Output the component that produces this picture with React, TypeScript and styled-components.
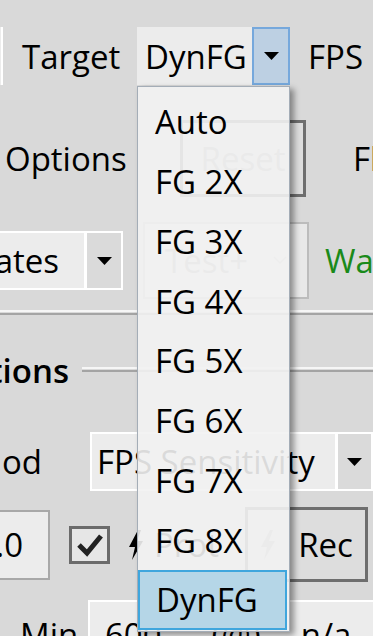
import React from "react";
import styled, { createGlobalStyle } from "styled-components";

const Global = createGlobalStyle`
  html, body { margin: 0; padding: 0; background: #d9d9d9; }
  #root { width: 373px; height: 636px; }
`;

const Page = styled.div`
  position: relative;
  width: 373px;
  height: 636px;
  overflow: hidden;
  background: #d9d9d9;
  font-family: "Open Sans", "Noto Sans", sans-serif;
  font-size: 33px;
  color: #000;
  white-space: nowrap;
`;

const Row = styled.div<{ $top: number; $h: number }>`
  display: flex;
  align-items: center;
  height: ${(p) => p.$h}px;
  margin-top: ${(p) => p.$top}px;
`;

const LeftStub = styled.div`
  align-self: stretch;
  width: 3px;
  box-sizing: border-box;
  background: #ececec;
  border-right: 2px solid #fff;
`;

const Label = styled.div<{ $w?: number; $pl?: number; $pr?: number; $ml?: number; $right?: boolean; $color?: string }>`
  display: flex;
  justify-content: ${(p) => (p.$right ? "flex-end" : "flex-start")};
  flex: none;
  box-sizing: border-box;
  ${(p) => (p.$w ? `width: ${p.$w}px;` : "")}
  padding-left: ${(p) => p.$pl ?? 0}px;
  padding-right: ${(p) => p.$pr ?? 0}px;
  margin-left: ${(p) => p.$ml ?? 0}px;
  color: ${(p) => p.$color ?? "#000"};
`;

const Combo = styled.div<{ $w: number; $h: number; $ml?: number; $border?: string }>`
  display: flex;
  flex: none;
  box-sizing: border-box;
  width: ${(p) => p.$w}px;
  height: ${(p) => p.$h}px;
  margin-left: ${(p) => p.$ml ?? 0}px;
  background: #ececec;
  border: ${(p) => (p.$border ? `2px solid ${p.$border}` : "none")};
`;

const ComboText = styled.div<{ $pl?: number; $pr?: number; $right?: boolean; $disabled?: boolean }>`
  flex: 1;
  display: flex;
  align-items: center;
  justify-content: ${(p) => (p.$right ? "flex-end" : "flex-start")};
  padding-left: ${(p) => p.$pl ?? 0}px;
  padding-right: ${(p) => p.$pr ?? 0}px;
  color: ${(p) => (p.$disabled ? "#a3a3a3" : "#000")};
  min-width: 0;
`;

const DropBtn = styled.div<{ $hot?: boolean; $w: number }>`
  flex: none;
  box-sizing: border-box;
  width: ${(p) => p.$w}px;
  display: flex;
  align-items: center;
  justify-content: center;
  background: ${(p) => (p.$hot ? "#bdd0e3" : "#dadada")};
  border: ${(p) => (p.$hot ? "2px solid #76a8dc" : "none")};
  border-left: ${(p) => (p.$hot ? "2px solid #76a8dc" : "3px solid #fff")};
`;

const Arrow = () => (
  <svg width="15" height="8" viewBox="0 0 15 8">
    <polygon points="0,0 15,0 7.5,8" fill="#000" />
  </svg>
);

const Chevron = () => (
  <svg width="14" height="9" viewBox="0 0 14 9">
    <polyline points="1,1 7,7 13,1" fill="none" stroke="#c4c4c4" strokeWidth="1.5" />
  </svg>
);

const Button = styled.div<{ $w: number; $h: number; $disabled?: boolean; $ml?: number }>`
  flex: none;
  box-sizing: border-box;
  width: ${(p) => p.$w}px;
  height: ${(p) => p.$h}px;
  margin-left: ${(p) => p.$ml ?? 0}px;
  display: flex;
  align-items: center;
  justify-content: center;
  gap: 22px;
  background: #dddddd;
  border: 3px solid #6e6e6e;
  color: ${(p) => (p.$disabled ? "#a0a0a0" : "#000")};
`;

const DisabledCombo = styled.div`
  flex: none;
  box-sizing: border-box;
  width: 166px;
  height: 77px;
  margin-left: 20px;
  display: flex;
  align-items: center;
  justify-content: space-between;
  padding: 0 20px;
  background: #e8e8e8;
  border: 2px solid #bcbcbc;
  color: #a3a3a3;
`;

const Etched = styled.div<{ $top: number; $ml?: number }>`
  flex: 1;
  height: 1px;
  margin-top: ${(p) => p.$top}px;
  margin-left: ${(p) => p.$ml ?? 0}px;
  border-top: 2px solid #f6f6f6;
  border-bottom: 2px solid #a4a4a4;
`;

const GroupTitle = styled.div`
  flex: none;
  width: 69px;
  display: flex;
  justify-content: flex-end;
  font-weight: 600;
`;

const TextBox = styled.div<{ $w: number; $h: number; $ml?: number; $border: string; $pl?: number; $pr?: number; $right?: boolean }>`
  flex: none;
  box-sizing: border-box;
  width: ${(p) => p.$w}px;
  height: ${(p) => p.$h}px;
  margin-left: ${(p) => p.$ml ?? 0}px;
  display: flex;
  align-items: center;
  justify-content: ${(p) => (p.$right ? "flex-end" : "flex-start")};
  padding-left: ${(p) => p.$pl ?? 0}px;
  padding-right: ${(p) => p.$pr ?? 0}px;
  background: #ececec;
  border: 2px solid ${(p) => p.$border};
`;

const Gap = styled.span<{ $ml: number; $color?: string }>`
  margin-left: ${(p) => p.$ml}px;
  color: ${(p) => p.$color ?? "#000"};
`;

const CheckBox = styled.div`
  flex: none;
  box-sizing: border-box;
  width: 41px;
  height: 38px;
  margin-left: 19px;
  display: flex;
  align-items: center;
  justify-content: center;
  background: #e6e6e6;
  border: 3px solid #6b6b6b;
`;

const IconLabel = styled.div`
  flex: none;
  width: 117px;
  margin-left: 18px;
  display: flex;
  align-items: center;
  gap: 10px;
`;

const Bolt = ({ color }: { color: string }) => (
  <svg width="16" height="30" viewBox="0 0 16 30">
    <polygon points="10,0 1,17 7,17 4,30 15,11 9,11 13,0" fill={color} />
  </svg>
);

const Popup = styled.div`
  position: absolute;
  left: 137px;
  top: 86px;
  width: 153px;
  box-sizing: border-box;
  padding: 5px 0 1px 0;
  background: rgba(242, 242, 242, 0.9);
  border: 1px solid #a4adb7;
  box-shadow: 4px 3px 6px rgba(0, 0, 0, 0.4);
  display: flex;
  flex-direction: column;
`;

const Item = styled.div<{ $sel?: boolean }>`
  box-sizing: border-box;
  height: 59.75px;
  display: flex;
  align-items: center;
  padding-left: ${(p) => (p.$sel ? 16 : 17)}px;
  margin-right: ${(p) => (p.$sel ? 2 : 0)}px;
  background: ${(p) => (p.$sel ? "#b5d6e7" : "transparent")};
  border: ${(p) => (p.$sel ? "2px solid #3fa6dd" : "none")};
  color: #000;
`;

const items = ["Auto", "FG 2X", "FG 3X", "FG 4X", "FG 5X", "FG 6X", "FG 7X", "FG 8X", "DynFG"];

export default function App() {
  return (
    <>
      <Global />
      <Page>
        <Row $top={27} $h={58}>
          <LeftStub />
          <Label $w={134} $pl={19}>Target</Label>
          <Combo $w={153} $h={58}>
            <ComboText $pl={8}>DynFG</ComboText>
            <DropBtn $hot $w={38}><Arrow /></DropBtn>
          </Combo>
          <Label $ml={18}>FPS</Label>
        </Row>

        <Row $top={35} $h={77}>
          <Label $w={180} $pl={5}>Options</Label>
          <Button $w={126} $h={77} $disabled>Reset</Button>
          <Label $ml={47}>Flags</Label>
        </Row>

        <Row $top={25} $h={77}>
          <Combo $w={223} $h={59} $ml={-100} $border="#fff">
            <ComboText $right $pr={25}>Updates</ComboText>
            <DropBtn $w={37}><Arrow /></DropBtn>
          </Combo>
          <DisabledCombo>
            <span>Test+</span>
            <Chevron />
          </DisabledCombo>
          <Label $ml={16} $color="#1a8a1a">Waiting</Label>
        </Row>

        <Row $top={11} $h={5}>
          <Etched $top={0} />
        </Row>

        <Row $top={30} $h={50}>
          <GroupTitle>Options</GroupTitle>
          <Etched $top={-2} $ml={13} />
        </Row>

        <Row $top={37} $h={59}>
          <Label $w={90} $pr={48} $right>Method</Label>
          <Combo $w={283} $h={59} $border="#fff">
            <ComboText $pl={5}>FPS Sensitivity</ComboText>
            <DropBtn $w={36}><Arrow /></DropBtn>
          </Combo>
        </Row>

        <Row $top={16} $h={75}>
          <TextBox $w={100} $h={70} $ml={-50} $border="#a8a8a8" $right $pr={25}>1.0</TextBox>
          <CheckBox>
            <svg width="28" height="24" viewBox="0 0 28 24">
              <polyline points="3,12 11,20 25,3" fill="none" stroke="#222" strokeWidth="5" />
            </svg>
          </CheckBox>
          <IconLabel>
            <Bolt color="#000" />
            <span>Prot</span>
          </IconLabel>
          <Button $w={123} $h={75}>
            <Bolt color="#b0b0b0" />
            <span>Rec</span>
          </Button>
        </Row>

        <Row $top={18} $h={68}>
          <Label $w={88} $pl={20}>Min</Label>
          <TextBox $w={290} $h={68} $border="#fff" $pl={15}>
            600<Gap $ml={50}>(@)</Gap><Gap $ml={40}>n/a</Gap>
          </TextBox>
        </Row>

        <Popup>
          {items.map((t) => (
            <Item key={t} $sel={t === "DynFG"}>{t}</Item>
          ))}
        </Popup>
      </Page>
    </>
  );
}
